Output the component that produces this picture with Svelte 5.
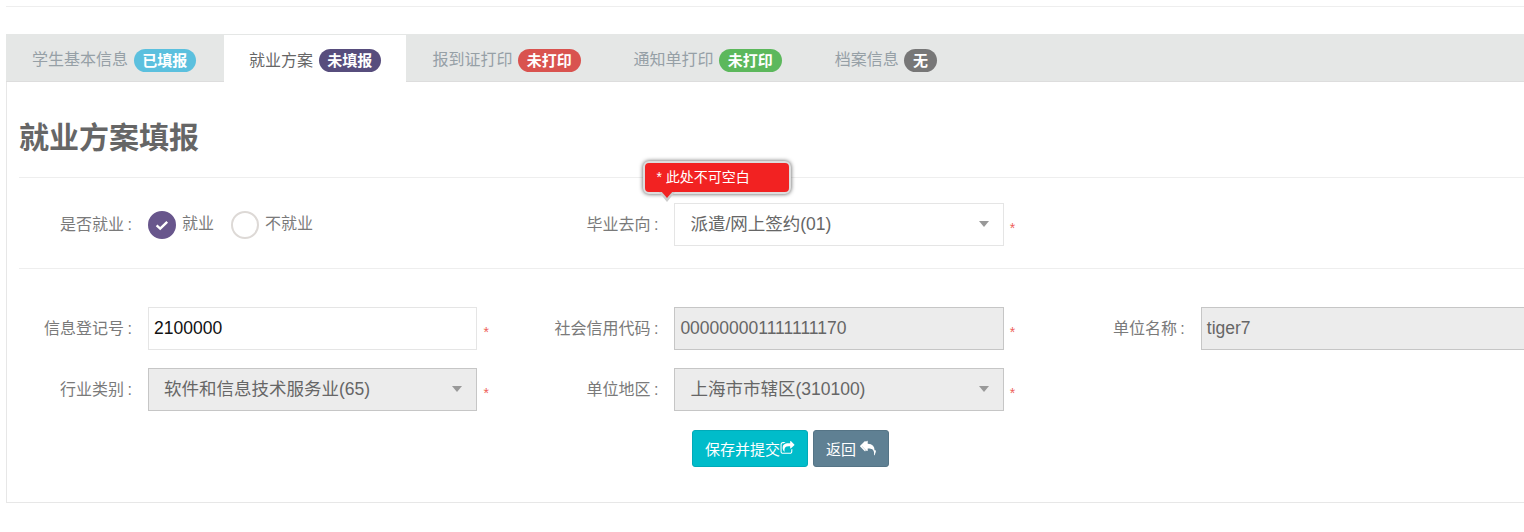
<script lang="ts">
  const tabs = [
    { name: '学生基本信息', badge: '已填报', tone: 'info' },
    { name: '就业方案', badge: '未填报', tone: 'purple', active: true },
    { name: '报到证打印', badge: '未打印', tone: 'danger' },
    { name: '通知单打印', badge: '未打印', tone: 'success' },
    { name: '档案信息', badge: '无', tone: 'muted' },
  ];
  const creditCode = '00000000' + '11111111' + '70';
</script>

<div class="page">
  <div class="topline"></div>

  <ul class="tabs">
    {#each tabs as tab}
      <li class="tab" class:active={tab.active}>
        {tab.name}<span class="badge {tab.tone}">{tab.badge}</span>
      </li>
    {/each}
  </ul>

  <div class="panel">
    <h1 class="title">就业方案填报</h1>

    <section class="row first">
      <div class="field">
        <span class="label">是否就业 :</span>
        <div class="radios">
          <span class="radio checked">
            <svg viewBox="0 0 16 16" width="16" height="16">
              <path d="M2.6 8.4 6.2 11.6 13.2 4.8" fill="none" stroke="#fff" stroke-width="2.4" />
            </svg>
          </span>
          <span class="radio-text">就业</span>
          <span class="radio"></span>
          <span class="radio-text">不就业</span>
        </div>
      </div>
      <div class="field">
        <span class="label">毕业去向 :</span>
        <div class="control select">
          派遣/网上签约(01)
          <div class="tip">
            <span class="tip-body">* 此处不可空白</span>
            <span class="tip-arrow"></span>
          </div>
        </div>
        <span class="star">*</span>
      </div>
    </section>

    <section class="rows">
      <div class="row">
        <div class="field">
          <span class="label">信息登记号 :</span>
          <div class="control input">2100000</div>
          <span class="star">*</span>
        </div>
        <div class="field">
          <span class="label">社会信用代码 :</span>
          <div class="control input disabled">{creditCode}</div>
          <span class="star">*</span>
        </div>
        <div class="field">
          <span class="label">单位名称 :</span>
          <div class="control input disabled">tiger7</div>
        </div>
      </div>
      <div class="row">
        <div class="field">
          <span class="label">行业类别 :</span>
          <div class="control select disabled">软件和信息技术服务业(65)</div>
          <span class="star">*</span>
        </div>
        <div class="field">
          <span class="label">单位地区 :</span>
          <div class="control select disabled">上海市市辖区(310100)</div>
          <span class="star">*</span>
        </div>
      </div>
    </section>

    <div class="actions">
      <button class="btn save">
        <span>保存并提交</span><svg viewBox="0 0 1792 1792" width="15" height="15">
          <path fill="currentColor" d="M1472 989v259q0 119-84.5 203.5t-203.5 84.5h-832q-119 0-203.5-84.5t-84.5-203.5v-832q0-119 84.5-203.5t203.5-84.5h255q13 0 22.5 9.5t9.5 22.5q0 27-26 32-77 26-133 60-10 4-16 4h-112q-66 0-113 47t-47 113v832q0 66 47 113t113 47h832q66 0 113-47t47-113v-214q0-19 18-29 28-13 54-37 16-16 35-8 21 9 21 29zm237-496l-384 384q-18 19-45 19-12 0-25-5-39-17-39-59v-192h-160q-323 0-438 131-119 137-74 473 3 23-20 34-8 2-12 2-16 0-26-13-10-14-21-31t-39.5-68.5-49.5-99.5-38.5-114-17.5-122q0-49 3.5-91t14-90 28-88 47-81.5 68.5-74 94.5-61.5 124.5-48.5 159.5-30.5 196.5-11h160v-192q0-42 39-59 13-5 25-5 26 0 45 19l384 384q19 19 19 45t-19 45z" />
        </svg>
      </button>
      <button class="btn back">
        <span>返回</span><svg viewBox="0 0 1792 1792" width="17" height="17">
          <path fill="currentColor" d="M640 1082v70q0 42-39 59-13 5-25 5-27 0-45-19l-512-512q-19-19-19-45t19-45l512-512q29-31 70-14 39 17 39 59v69l-397 398q-19 19-19 45t19 45zm1152 38q0 166-127 451-3 7-10.5 24t-13.5 30-13 22q-12 17-28 17-15 0-23.5-10t-8.5-25q0-9 2.5-26.5t2.5-23.5q5-68 5-123 0-101-17.5-181t-48.5-138.5-80-101-105.5-69.5-133-42.5-154-21.5-175.5-6v224q0 42-39 59-13 5-25 5-27 0-45-19l-512-512q-19-19-19-45t19-45l512-512q29-31 70-14 39 17 39 59v262q411 28 599 221 169 173 169 509z" />
        </svg>
      </button>
    </div>
  </div>
</div>

<style>
  :global(body) {
    margin: 0;
    background: #fff;
    overflow: hidden;
    font-family: "Liberation Sans", "Noto Sans CJK SC", sans-serif;
  }

  .page {
    width: 1569px;
    padding: 6px 0 0 6px;
    color: #666;
  }

  .topline {
    border-top: 1px solid #eee;
    margin-bottom: 27px;
  }

  .tabs {
    display: flex;
    height: 47px;
    margin: 0;
    padding: 0;
    list-style: none;
    background: #e5e7e6;
    border-bottom: 1px solid #ddd;
  }

  .tab {
    display: flex;
    align-items: center;
    box-sizing: border-box;
    height: 47px;
    gap: 5.5px;
    padding: 1px 26.5px 0;
    font-size: 16px;
    color: #96a0a6;
    white-space: nowrap;
  }

  .tab:first-child {
    padding-left: 26px;
    padding-right: 28px;
  }

  .tab.active {
    margin-top: 1px;
    padding: 0 25px;
    background: #fff;
    color: #666;
  }

  .badge {
    display: inline-block;
    height: 23px;
    margin-top: 4px;
    line-height: 23px;
    padding: 0 8.75px;
    border-radius: 12px;
    font-size: 15px;
    font-weight: 700;
    color: #fff;
    text-align: center;
  }

  .info { background: #5bc0de; }
  .purple { background: #574d7d; }
  .danger { background: #d9534f; }
  .success { background: #5cb85c; }
  .muted { background: #777; }

  .panel {
    height: 420px;
    padding-left: 12px;
    border-left: 1px solid #e7e7e7;
    border-bottom: 1px solid #e7e7e7;
    margin-right: -6px;
  }

  .title {
    height: 95px;
    margin: 0;
    line-height: 112px;
    font-size: 30px;
    font-weight: 700;
    color: #666;
    border-bottom: 1px solid #eee;
  }

  .row {
    display: grid;
    grid-template-columns: repeat(3, 526.4px);
    align-items: start;
  }

  .row.first {
    height: 91px;
    padding-top: 25px;
    box-sizing: border-box;
    border-bottom: 1px solid #eee;
  }

  .rows {
    display: flex;
    flex-direction: column;
    gap: 18px;
    padding-top: 38px;
  }

  .field {
    display: grid;
    grid-template-columns: 129px 329.4px auto;
    align-items: center;
  }

  .label {
    padding: 0 16px 3px 0;
    font-size: 16px;
    word-spacing: -1px;
    color: #7a7a7a;
    text-align: right;
    white-space: nowrap;
  }

  .control {
    position: relative;
    box-sizing: border-box;
    height: 43px;
    line-height: 41px;
    border: 1px solid #e5e5e5;
    font-size: 17.5px;
    color: #666;
  }

  .input {
    padding-left: 5px;
    color: #111;
  }

  .select {
    padding-left: 15px;
  }

  .select::after {
    content: "";
    position: absolute;
    right: 14px;
    top: 17px;
    border: 5px solid transparent;
    border-top: 6px solid #999;
    border-bottom: 0;
  }

  .disabled {
    background: #ececec;
    border-color: #c6c6c6;
    color: #666;
  }

  .star {
    padding: 6px 0 0 6px;
    font-size: 14px;
    color: #ee5f5b;
  }

  .radios {
    display: flex;
    align-items: center;
    height: 43px;
    font-size: 16px;
    color: #7a7a7a;
  }

  .radio {
    box-sizing: border-box;
    display: flex;
    align-items: center;
    justify-content: center;
    width: 28px;
    height: 28px;
    border: 2px solid #ddd9d6;
    border-radius: 50%;
    background: #fff;
  }

  .radio.checked {
    background: #68568c;
    border-color: #68568c;
  }

  .radio-text {
    padding: 0 17px 5px 6px;
  }

  .tip {
    position: absolute;
    left: -32px;
    top: -43px;
    z-index: 2;
  }

  .tip-body {
    display: block;
    box-sizing: border-box;
    width: 148px;
    height: 33px;
    padding-left: 11px;
    line-height: 28px;
    font-size: 14px;
    color: #fff;
    background: #f22222;
    border: 2px solid #ddd;
    border-radius: 6px;
    box-shadow: 0 0 4px #555;
    white-space: nowrap;
  }

  .tip-arrow {
    position: absolute;
    left: 16px;
    top: 31px;
    width: 0;
    height: 0;
    border-left: 8px solid transparent;
    border-right: 8px solid transparent;
    border-top: 10px solid #ccc;
  }

  .tip-arrow::after {
    content: "";
    position: absolute;
    left: -6px;
    top: -11px;
    border-left: 6px solid transparent;
    border-right: 6px solid transparent;
    border-top: 7px solid #f22222;
  }

  .actions {
    display: flex;
    justify-content: center;
    gap: 5px;
    width: 1543px;
    margin-top: 19px;
  }

  .btn {
    display: inline-flex;
    align-items: center;
    box-sizing: border-box;
    height: 37px;
    padding: 0 12px;
    border-radius: 3px;
    font-family: inherit;
    font-size: 15px;
    color: #fff;
    white-space: nowrap;
  }

  .save {
    width: 116px;
    background: #00bcca;
    border: 1px solid #00aab8;
  }

  .back {
    width: 76px;
    background: #5f8093;
    border: 1px solid #557486;
    gap: 4px;
  }
</style>
